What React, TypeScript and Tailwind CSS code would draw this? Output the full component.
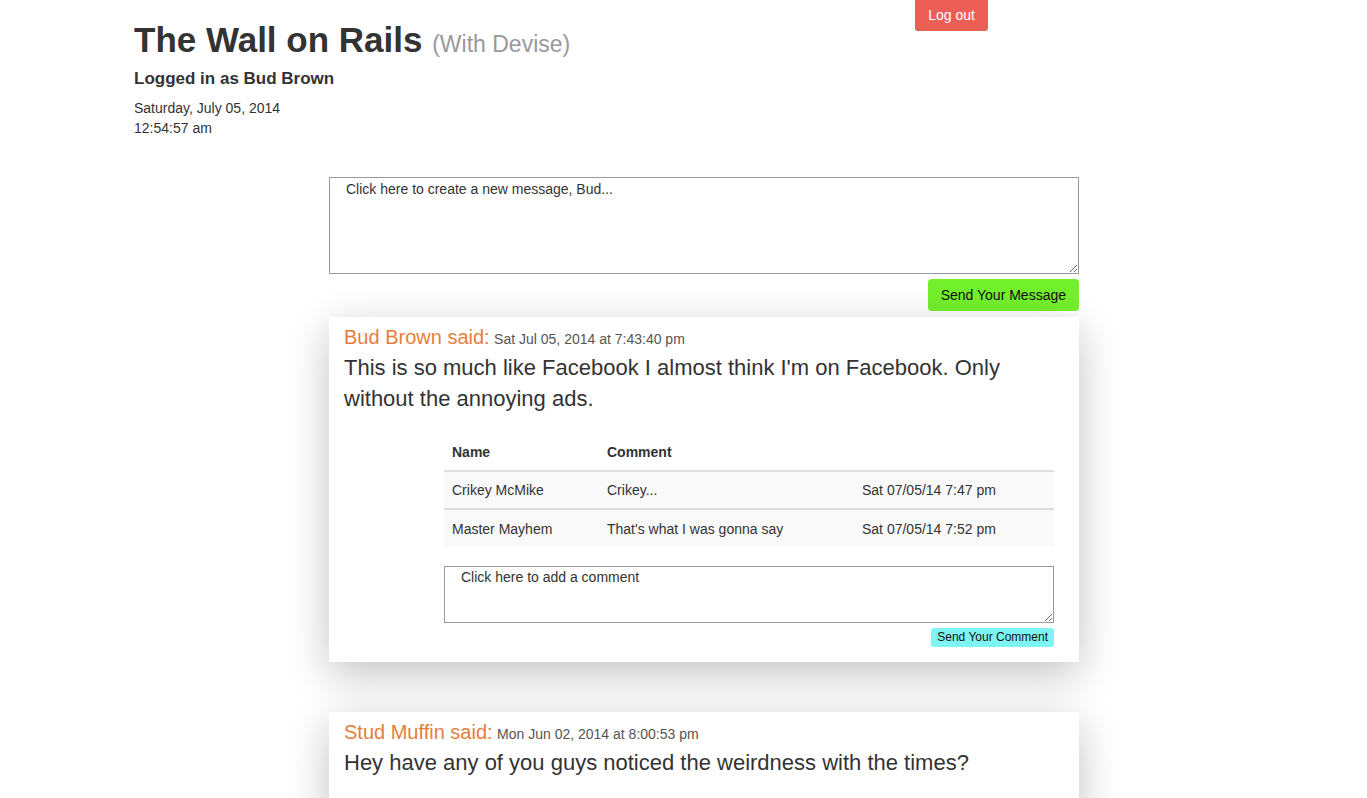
const comments = [
  { name: 'Crikey McMike', text: 'Crikey...', date: 'Sat 07/05/14 7:47 pm' },
  { name: 'Master Mayhem', text: "That's what I was gonna say", date: 'Sat 07/05/14 7:52 pm' },
];

function CommentTable() {
  return (
    <table className="w-[610px] border-collapse text-[14px] leading-[20px] text-[#333]">
      <thead>
        <tr className="border-b-2 border-[#ddd]">
          <th className="w-[155px] p-2 text-left font-bold">Name</th>
          <th className="w-[255px] p-2 text-left font-bold">Comment</th>
          <th className="p-2 text-left font-bold"></th>
        </tr>
      </thead>
      <tbody>
        {comments.map((c, i) => (
          <tr key={c.name} className={`bg-[#f9f9f9] ${i > 0 ? 'border-t-2 border-[#ddd]' : ''}`}>
            <td className="h-[38px] px-2">{c.name}</td>
            <td className="h-[38px] px-2">{c.text}</td>
            <td className="h-[38px] px-2">{c.date}</td>
          </tr>
        ))}
      </tbody>
    </table>
  );
}

function Post({ name, when, body, children }: { name: string; when: string; body: string; children?: React.ReactNode }) {
  return (
    <div className="w-[750px] bg-white px-[15px] pt-[6px] pb-[15px] shadow-[0_12px_40px_rgba(0,0,0,0.24)]">
      <div className="h-[28px] leading-[28px]">
        <span className="text-[20px] text-[#e67e3a]">{name} said:</span>{' '}
        <span className="text-[14px] text-[#555]">{when}</span>
      </div>
      <p className="mt-[1px] text-[22px] leading-[31px] text-[#333]">{body}</p>
      {children}
    </div>
  );
}

export default function App() {
  return (
    <div className="min-h-screen bg-white font-['Liberation_Sans',Arial,sans-serif] text-[#333]">
      {/* header */}
      <div className="ml-[134px] flex w-[854px] justify-between">
        <div>
          <h1 className="mt-[20px] text-[35px] leading-[40px] font-bold text-[#333]">
            The Wall on Rails <span className="text-[23px] font-normal text-[#999]">(With Devise)</span>
          </h1>
          <h4 className="mt-[5px] text-[17px] leading-[20px] font-bold">Logged in as Bud Brown</h4>
          <div className="mt-[9px] text-[14px] leading-[20px]">
            <div>Saturday, July 05, 2014</div>
            <div>12:54:57 am</div>
          </div>
        </div>
        <div>
          <button className="h-[31px] rounded-b-[3px] bg-[#ec5f57] px-[13px] text-[14px] text-white">Log out</button>
        </div>
      </div>

      {/* wall */}
      <div className="mt-[39px] ml-[329px] flex w-[750px] flex-col pb-[60px]">
        <textarea
          className="block h-[97px] w-[750px] border border-[#999] px-[16px] pt-[1px] text-[14px] leading-[20px] text-[#333] placeholder:text-[#333] outline-none"
          placeholder="Click here to create a new message, Bud..."
        />
        <div className="mt-[5px] flex justify-end">
          <button className="h-[32px] rounded-[4px] bg-[#73f02c] px-[13px] text-[14px] text-[#111]">Send Your Message</button>
        </div>

        <div className="mt-[6px] flex flex-col gap-[50px]">
          <Post
            name="Bud Brown"
            when="Sat Jul 05, 2014 at 7:43:40 pm"
            body="This is so much like Facebook I almost think I'm on Facebook. Only without the annoying ads."
          >
            <div className="mt-[20px] ml-[100px] w-[610px]">
              <CommentTable />
              <textarea
                className="mt-[19px] block h-[57px] w-[610px] border border-[#999] px-[16px] pt-0 text-[14px] leading-[20px] text-[#333] placeholder:text-[#333] outline-none"
                placeholder="Click here to add a comment"
              />
              <div className="mt-[5px] flex justify-end">
                <button className="h-[19px] rounded-[3px] bg-[#7ff4f4] px-[6px] text-[12px] leading-[19px] text-[#111]">Send Your Comment</button>
              </div>
            </div>
          </Post>
          <Post
            name="Stud Muffin"
            when="Mon Jun 02, 2014 at 8:00:53 pm"
            body="Hey have any of you guys noticed the weirdness with the times?"
          >
            <div className="h-[60px]" />
          </Post>
        </div>
      </div>
    </div>
  );
}
